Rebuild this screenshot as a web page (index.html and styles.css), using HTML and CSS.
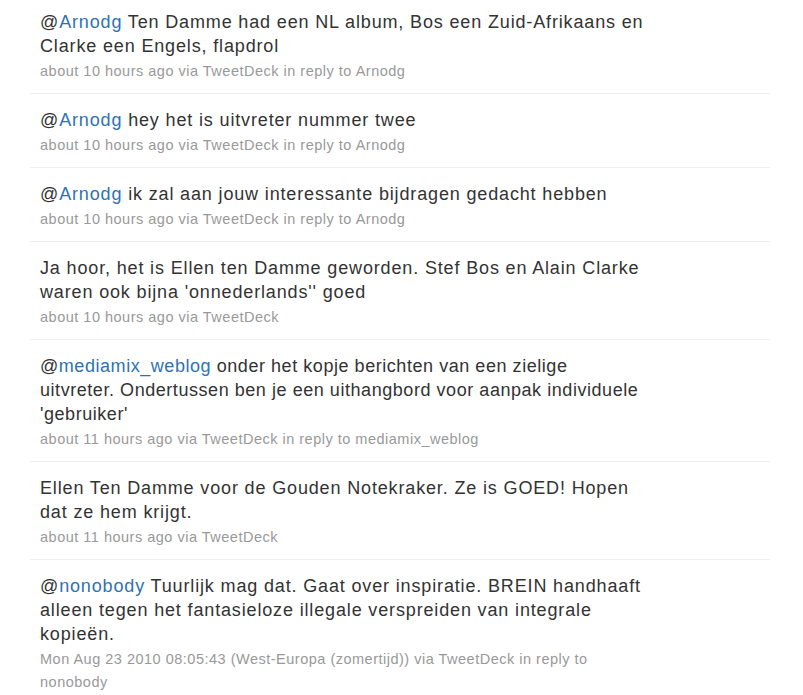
FILE: index.html
```html
<!DOCTYPE html>
<html lang="nl">
<head>
    <meta charset="UTF-8">
    <title>Tweets</title>
    <link rel="stylesheet" href="styles.css">
</head>
<body>

    <ol class="timeline">
        <li class="status">
            <p class="entry">@<a href="#">Arnodg</a> Ten Damme had een NL album, Bos een Zuid-Afrikaans en Clarke een Engels, flapdrol</p>
            <p class="meta">about 10 hours ago via TweetDeck in reply to Arnodg</p>
        </li>
        <li class="status">
            <p class="entry">@<a href="#">Arnodg</a> hey het is uitvreter nummer twee</p>
            <p class="meta">about 10 hours ago via TweetDeck in reply to Arnodg</p>
        </li>
        <li class="status">
            <p class="entry">@<a href="#">Arnodg</a> ik zal aan jouw interessante bijdragen gedacht hebben</p>
            <p class="meta">about 10 hours ago via TweetDeck in reply to Arnodg</p>
        </li>
        <li class="status">
            <p class="entry">Ja hoor, het is Ellen ten Damme geworden. Stef Bos en Alain Clarke waren ook bijna 'onnederlands'' goed</p>
            <p class="meta">about 10 hours ago via TweetDeck</p>
        </li>
        <li class="status">
            <p class="entry narrow">@<a href="#">mediamix_weblog</a> onder het kopje berichten van een zielige<br>uitvreter. Ondertussen ben je een uithangbord voor aanpak individuele 'gebruiker'</p>
            <p class="meta">about 11 hours ago via TweetDeck in reply to mediamix_weblog</p>
        </li>
        <li class="status">
            <p class="entry">Ellen Ten Damme voor de Gouden Notekraker. Ze is GOED! Hopen dat ze hem krijgt.</p>
            <p class="meta">about 11 hours ago via TweetDeck</p>
        </li>
        <li class="status">
            <p class="entry">@<a href="#">nonobody</a> Tuurlijk mag dat. Gaat over inspiratie. BREIN handhaaft alleen tegen het fantasieloze illegale verspreiden van integrale kopieën.</p>
            <p class="meta">Mon Aug 23 2010 08:05:43 (West-Europa (zomertijd)) via TweetDeck in reply to nonobody</p>
        </li>
    </ol>

</body>
</html>
```

FILE: styles.css
```css
body {
    font-family: 'Liberation Sans', Arial, sans-serif;
    background-color: #fff;
    color: #333;
    margin: 0;
    padding: 0;
}
.timeline {
    list-style: none;
    margin: 0 0 0 30px;
    padding: 0;
    width: 740px;
}
.status {
    padding: 14px 10px 10px;
    border-bottom: 1px solid #eee;
}
.status:first-child {
    padding-top: 10px;
}
.status:last-child {
    border-bottom: none;
}
.entry {
    margin: 0;
    max-width: 615px;
    font-size: 18px;
    line-height: 24px;
    letter-spacing: 0.85px;
}
.entry.narrow {
    letter-spacing: 0.55px;
}
.entry a {
    color: #2e72b4;
    text-decoration: none;
}
.meta {
    margin: 2px 0 0;
    max-width: 560px;
    font-size: 14.5px;
    line-height: 23px;
    letter-spacing: 0.5px;
    color: #999;
}
```
